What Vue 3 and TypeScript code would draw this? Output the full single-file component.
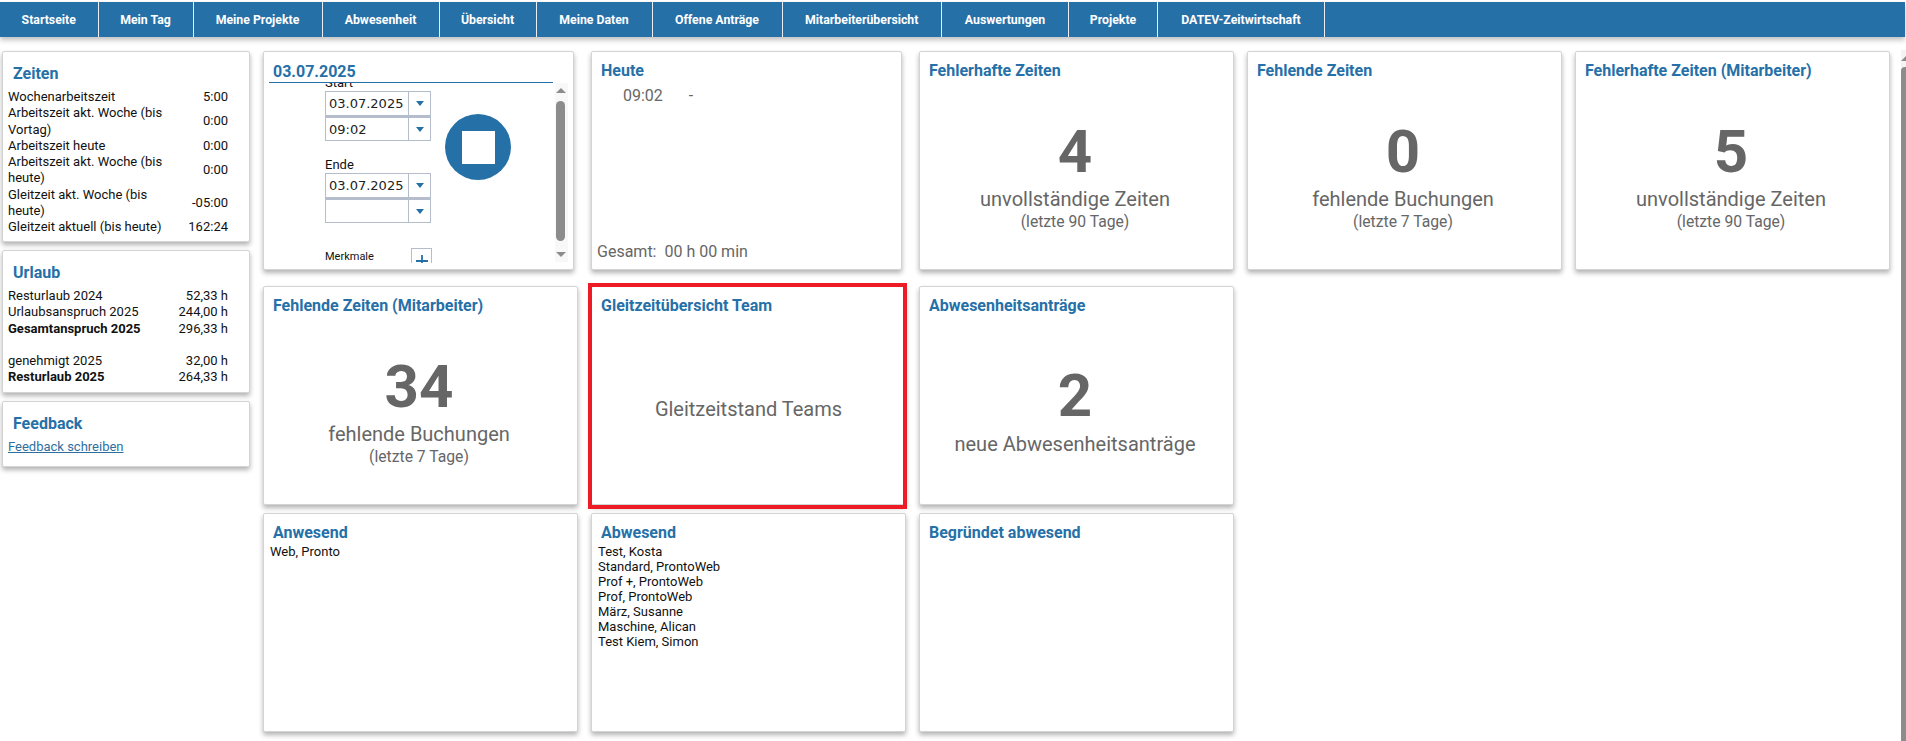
<script setup lang="ts">
const nav = ['Startseite', 'Mein Tag', 'Meine Projekte', 'Abwesenheit', 'Übersicht', 'Meine Daten', 'Offene Anträge', 'Mitarbeiterübersicht', 'Auswertungen', 'Projekte', 'DATEV-Zeitwirtschaft']

const zeiten = [
  { label: 'Wochenarbeitszeit', value: '5:00' },
  { label: 'Arbeitszeit akt. Woche (bis Vortag)', value: '0:00' },
  { label: 'Arbeitszeit heute', value: '0:00' },
  { label: 'Arbeitszeit akt. Woche (bis heute)', value: '0:00' },
  { label: 'Gleitzeit akt. Woche (bis heute)', value: '-05:00' },
  { label: 'Gleitzeit aktuell (bis heute)', value: '162:24' },
]

const urlaub = [
  { label: 'Resturlaub 2024', value: '52,33 h' },
  { label: 'Urlaubsanspruch 2025', value: '244,00 h' },
  { label: 'Gesamtanspruch 2025', value: '296,33 h', bold: true },
  { label: 'genehmigt 2025', value: '32,00 h', gap: true },
  { label: 'Resturlaub 2025', value: '264,33 h', bold: true },
]

const abwesend = ['Test, Kosta', 'Standard, ProntoWeb', 'Prof +, ProntoWeb', 'Prof, ProntoWeb', 'März, Susanne', 'Maschine, Alican', 'Test Kiem, Simon']
</script>

<template>
  <div class="page">
    <nav class="topnav">
      <a v-for="n in nav" :key="n" class="navitem">{{ n }}</a>
    </nav>

    <div class="main">
      <aside class="side">
        <section class="scard">
          <h3 class="stitle">Zeiten</h3>
          <div v-for="z in zeiten" :key="z.label" class="srow">
            <span class="slabel">{{ z.label }}</span>
            <span class="sval">{{ z.value }}</span>
          </div>
        </section>
        <section class="scard">
          <h3 class="stitle">Urlaub</h3>
          <div v-for="u in urlaub" :key="u.label" class="srow" :class="{ gap: u.gap }">
            <span class="slabel" :class="{ bold: u.bold }">{{ u.label }}</span>
            <span class="sval">{{ u.value }}</span>
          </div>
        </section>
        <section class="scard fb">
          <h3 class="stitle">Feedback</h3>
          <a class="fblink">Feedback schreiben</a>
        </section>
      </aside>

      <div class="grid">
        <!-- row 1 -->
        <section class="card narrow stamp">
          <h3 class="datehead">03.07.2025</h3>
          <div class="stampbody">
            <div class="form">
              <div class="fields">
                <label class="flabel">Start</label>
                <div class="combo"><span class="cval">03.07.2025</span><span class="cbtn"><i class="caret"></i></span></div>
                <div class="combo"><span class="cval">09:02</span><span class="cbtn"><i class="caret"></i></span></div>
                <label class="flabel ende">Ende</label>
                <div class="combo"><span class="cval">03.07.2025</span><span class="cbtn"><i class="caret"></i></span></div>
                <div class="combo"><span class="cval"></span><span class="cbtn"><i class="caret"></i></span></div>
                <div class="merk">
                  <span class="merktext">Merkmale</span>
                  <span class="plus">
                    <svg width="14" height="14" viewBox="0 0 14 14"><path d="M7 1v12M1 7h12" stroke="#2670a8" stroke-width="1.8" fill="none" /></svg>
                  </span>
                </div>
              </div>
              <button class="stop"><span class="square"></span></button>
            </div>
            <div class="vbar">
              <i class="arrow up"></i>
              <div class="thumb"></div>
              <i class="arrow down"></i>
            </div>
          </div>
        </section>

        <section class="card narrow">
          <h3 class="title">Heute</h3>
          <div class="today"><span>09:02</span><span>-</span></div>
          <div class="total">Gesamt:&nbsp; 00 h 00 min</div>
        </section>

        <section class="card stat">
          <h3 class="title">Fehlerhafte Zeiten</h3>
          <div class="big">4</div>
          <div class="sub">unvollständige Zeiten</div>
          <div class="small">(letzte 90 Tage)</div>
        </section>
        <section class="card stat">
          <h3 class="title">Fehlende Zeiten</h3>
          <div class="big">0</div>
          <div class="sub">fehlende Buchungen</div>
          <div class="small">(letzte 7 Tage)</div>
        </section>
        <section class="card stat">
          <h3 class="title">Fehlerhafte Zeiten (Mitarbeiter)</h3>
          <div class="big">5</div>
          <div class="sub">unvollständige Zeiten</div>
          <div class="small">(letzte 90 Tage)</div>
        </section>

        <!-- row 2 -->
        <section class="card stat">
          <h3 class="title">Fehlende Zeiten (Mitarbeiter)</h3>
          <div class="big">34</div>
          <div class="sub">fehlende Buchungen</div>
          <div class="small">(letzte 7 Tage)</div>
        </section>
        <section class="card marked">
          <h3 class="title">Gleitzeitübersicht Team</h3>
          <div class="teams">Gleitzeitstand Teams</div>
        </section>
        <section class="card stat nosmall">
          <h3 class="title">Abwesenheitsanträge</h3>
          <div class="big">2</div>
          <div class="sub">neue Abwesenheitsanträge</div>
        </section>
        <div></div>
        <div></div>

        <!-- row 3 -->
        <section class="card list">
          <h3 class="title">Anwesend</h3>
          <div class="names"><div>Web, Pronto</div></div>
        </section>
        <section class="card list">
          <h3 class="title">Abwesend</h3>
          <div class="names"><div v-for="a in abwesend" :key="a">{{ a }}</div></div>
        </section>
        <section class="card list">
          <h3 class="title">Begründet abwesend</h3>
        </section>
      </div>
    </div>

    <div class="pagebar"><i class="pagearrow"></i><div class="pagethumb"></div></div>
  </div>
</template>

<style>
html, body {
  margin: 0;
  background: #fff;
  overflow: hidden;
}
</style>

<style scoped>
.page {
  width: 1906px;
  height: 741px;
  overflow: hidden;
  position: relative;
  font-family: Roboto, "Liberation Sans", sans-serif;
  color: #111;
  padding-top: 2px;
  box-sizing: border-box;
}
.topnav {
  display: flex;
  height: 35px;
  width: 1905px;
  background: #2670a8;
  box-shadow: 0 3px 5px rgba(0, 0, 0, 0.25);
}
.navitem {
  display: flex;
  align-items: center;
  justify-content: center;
  box-sizing: border-box;
  height: 100%;
  color: #fff;
  font-size: 12.3px;
  font-weight: 700;
  border-right: 1px solid #e8eef4;
}
.navitem:nth-child(1) { width: 98.5px; }
.navitem:nth-child(2) { width: 95px; }
.navitem:nth-child(3) { width: 129px; }
.navitem:nth-child(4) { width: 117px; }
.navitem:nth-child(5) { width: 97px; }
.navitem:nth-child(6) { width: 116px; }
.navitem:nth-child(7) { width: 130px; }
.navitem:nth-child(8) { width: 159.5px; }
.navitem:nth-child(9) { width: 127px; }
.navitem:nth-child(10) { width: 89px; }
.navitem:nth-child(11) { width: 167px; }

.main {
  display: flex;
  align-items: flex-start;
  padding: 14px 0 0 2px;
  gap: 13px;
}
.side {
  width: 248px;
  display: flex;
  flex-direction: column;
  gap: 8px;
}
.scard, .card {
  background: #fff;
  box-sizing: border-box;
  border: 1px solid #d4d4d4;
  border-radius: 2px;
  box-shadow: 0 3px 5px rgba(0, 0, 0, 0.3);
}
.scard {
  padding: 0 21px 0 5px;
}
.scard:nth-child(1) { height: 191px; }
.scard:nth-child(2) { height: 143px; }
.scard.fb { height: 66px; }
.stitle {
  margin: 13px 0 6px 5px;
  font-size: 16px;
  line-height: 18px;
  font-weight: 700;
  color: #2670a8;
}
.srow {
  display: flex;
  justify-content: space-between;
  align-items: center;
  font-size: 13px;
  line-height: 16.3px;
}
.srow.gap { margin-top: 16px; }
.slabel { width: 170px; }
.bold { font-weight: 700; width: 190px; }
.sval { text-align: right; white-space: nowrap; }
.fblink {
  display: block;
  font-size: 13px;
  line-height: 16px;
  color: #2f6f9f;
  text-decoration: underline;
}

.grid {
  display: grid;
  grid-template-columns: repeat(5, 315px);
  grid-template-rows: 227px 219px 219px;
  column-gap: 13px;
  row-gap: 8px;
}
.card {
  position: relative;
  padding: 10px 9px;
  overflow: hidden;
}
.card.narrow { width: 311px; }
.card:nth-child(-n+5) { height: 219px; }
.marked { overflow: visible; }
.marked::after {
  content: "";
  position: absolute;
  left: -4px;
  top: -4px;
  right: -2px;
  bottom: -5px;
  border: 4px solid #ed1c24;
  pointer-events: none;
}
.title {
  margin: 0;
  font-size: 16px;
  line-height: 18px;
  font-weight: 700;
  color: #2670a8;
}
.stat {
  display: flex;
  flex-direction: column;
  align-items: center;
  padding-right: 12px;
}
.stat .title { align-self: flex-start; white-space: nowrap; }
.big {
  margin-top: 36px;
  font-size: 60px;
  line-height: 72px;
  font-weight: 700;
  color: #666;
}
.nosmall .big { margin-top: 45px; }
.sub {
  margin-top: -2px;
  font-size: 20px;
  line-height: 26px;
  color: #666;
}
.nosmall .sub { margin-top: -1px; }
.small {
  font-size: 15.7px;
  line-height: 17px;
  margin-top: 1px;
  color: #666;
}
.today {
  display: flex;
  gap: 26px;
  margin: 6px 0 0 22px;
  font-size: 16px;
  line-height: 20px;
  color: #666;
}
.total {
  position: absolute;
  left: 5px;
  bottom: 7px;
  font-size: 16px;
  line-height: 20px;
  color: #666;
}
.teams {
  margin-top: 82px;
  text-align: center;
  font-size: 20px;
  line-height: 24px;
  color: #666;
}
.names {
  margin: 2px 0 0 -3px;
  font-size: 13px;
  line-height: 15px;
}

.stamp { padding: 0; }
.datehead {
  margin: 10px 20px 0 5px;
  padding-left: 4px;
  height: 20px;
  font-size: 16px;
  line-height: 20px;
  font-weight: 700;
  color: #2670a8;
  border-bottom: 1px solid #2670a8;
}
.stampbody {
  display: flex;
  justify-content: space-between;
  height: 180px;
  padding-right: 5px;
  overflow: hidden;
}
.form {
  display: flex;
  align-items: flex-start;
  padding-left: 61px;
  gap: 14px;
  height: 180px;
  overflow: hidden;
}
.fields {
  width: 106px;
  margin-top: -9px;
}
.flabel {
  display: block;
  font-size: 13px;
  line-height: 17px;
  color: #111;
}
.flabel.ende { margin-top: 15px; }
.combo {
  display: flex;
  box-sizing: border-box;
  height: 25px;
  border: 1px solid #b5bccb;
}
.combo + .combo { border-top-width: 2px; }
.cval {
  flex: 1;
  padding-left: 3px;
  font-family: "DejaVu Sans", sans-serif;
  font-size: 13px;
  line-height: 23px;
  color: #222;
}
.cbtn {
  width: 21px;
  display: flex;
  align-items: center;
  justify-content: center;
  border-left: 1px solid #b5bccb;
}
.caret {
  width: 0;
  height: 0;
  border-left: 4.5px solid transparent;
  border-right: 4.5px solid transparent;
  border-top: 5px solid #2670a8;
}
.merk {
  display: flex;
  justify-content: space-between;
  align-items: flex-start;
  margin-top: 25px;
  font-size: 11px;
  line-height: 15px;
  width: 107px;
}
.merktext { padding-top: 1px; }
.plus {
  width: 21px;
  height: 30px;
  border: 1px solid #b5bccb;
  display: flex;
  justify-content: center;
  padding-top: 5px;
  box-sizing: border-box;
}
.stop {
  margin-top: 31px;
  width: 66px;
  height: 66px;
  padding: 0;
  border: 0;
  border-radius: 50%;
  background: #2670a8;
  display: flex;
  align-items: center;
  justify-content: center;
}
.square {
  width: 33px;
  height: 33px;
  background: #fff;
}
.vbar {
  width: 13px;
  height: 179px;
  background: #f8f8f8;
  display: flex;
  flex-direction: column;
  align-items: flex-start;
  justify-content: space-between;
  padding: 5px 0 5px 1px;
  box-sizing: border-box;
}
.thumb {
  width: 9px;
  height: 140px;
  margin-bottom: 4px;
  border-radius: 5px;
  background: #8c8c8c;
}
.arrow {
  width: 0;
  height: 0;
  border-left: 5px solid transparent;
  border-right: 5px solid transparent;
}
.arrow.up { border-bottom: 5px solid #8c8c8c; }
.arrow.down { border-top: 5px solid #8c8c8c; }

.pagebar {
  position: absolute;
  right: 0;
  top: 50px;
  bottom: 0;
  width: 5px;
  background: #f4f4f4;
  overflow: hidden;
}
.pagearrow {
  display: block;
  width: 0;
  height: 0;
  margin: 6px 0 0 0;
  border-left: 5px solid transparent;
  border-bottom: 5px solid #8c8c8c;
}
.pagethumb {
  margin-top: 6px;
  height: 680px;
  background: #8c8c8c;
  border-top-left-radius: 4px;
}
</style>
